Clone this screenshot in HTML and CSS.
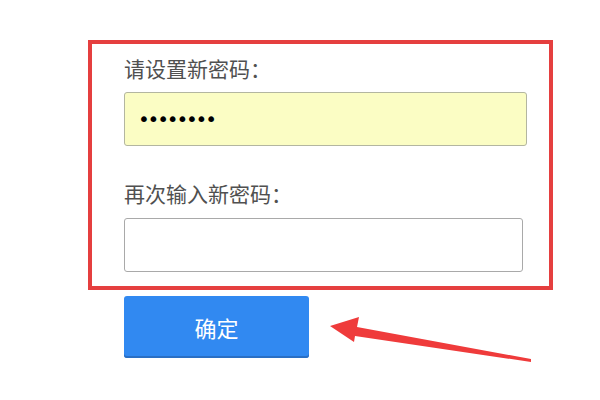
FILE: index.html
```html
<!DOCTYPE html>
<html lang="zh-CN">
<head>
<meta charset="utf-8">
<title>设置新密码</title>
<link rel="stylesheet" href="styles.css">
</head>
<body>
<div class="page">
  <form class="reset-form">
    <div class="highlight-box">
      <label class="field-label" for="pwd1">请设置新密码：</label>
      <input class="field-input filled" id="pwd1" type="password" value="12345678">
      <label class="field-label second" for="pwd2">再次输入新密码：</label>
      <input class="field-input narrow" id="pwd2" type="password" value="">
    </div>
    <button class="submit-btn" type="button">确定</button>
  </form>
</div>
<svg class="annotation-arrow" width="600" height="400" viewBox="0 0 600 400" aria-hidden="true">
  <polygon points="330,326 359,317 357,327 531,359 531,362 355,336 354,342" fill="#ef3b3b"/>
</svg>
</body>
</html>
```
FILE: styles.css
```css
html, body {
  margin: 0;
  padding: 0;
  background: #ffffff;
}

body {
  width: 600px;
  height: 400px;
  overflow: hidden;
  font-family: "Noto Sans CJK SC", "Noto Sans", sans-serif;
}

.page {
  padding-top: 40px;
  padding-left: 88px;
}

.reset-form {
  display: flex;
  flex-direction: column;
  align-items: flex-start;
}

.highlight-box {
  box-sizing: border-box;
  width: 465px;
  height: 250px;
  border: 4px solid #e53f3f;
  padding: 10px 0 0 32px;
  display: flex;
  flex-direction: column;
  align-items: flex-start;
}

.field-label {
  display: block;
  font-size: 21px;
  line-height: 28px;
  height: 28px;
  color: #505050;
  letter-spacing: 0;
}

.field-label.second {
  margin-top: 33px;
}

.field-input {
  box-sizing: border-box;
  display: block;
  width: 403px;
  height: 54px;
  margin-top: 10px;
  border: 1px solid #a9a9a9;
  border-radius: 3px;
  background: #ffffff;
  padding: 0 0 0 13px;
  font-family: "DejaVu Sans", sans-serif;
  font-size: 20px;
  letter-spacing: -2.2px;
  color: #000000;
  outline: none;
}

.field-input.filled {
  background: #fbfdc4;
  border-color: #b3b6a0;
}

.field-input.narrow {
  width: 399px;
  margin-top: 11px;
}

.submit-btn {
  box-sizing: border-box;
  margin-top: 6px;
  margin-left: 36px;
  width: 185px;
  height: 62px;
  border: none;
  border-radius: 3px;
  background: #3189f1;
  box-shadow: inset 0 -2px 0 #2a6fc4;
  color: #ffffff;
  font-family: "Noto Sans CJK SC", sans-serif;
  font-size: 22px;
  line-height: 62px;
  padding: 0;
  cursor: pointer;
}

.annotation-arrow {
  position: absolute;
  left: 0;
  top: 0;
  pointer-events: none;
}
```
